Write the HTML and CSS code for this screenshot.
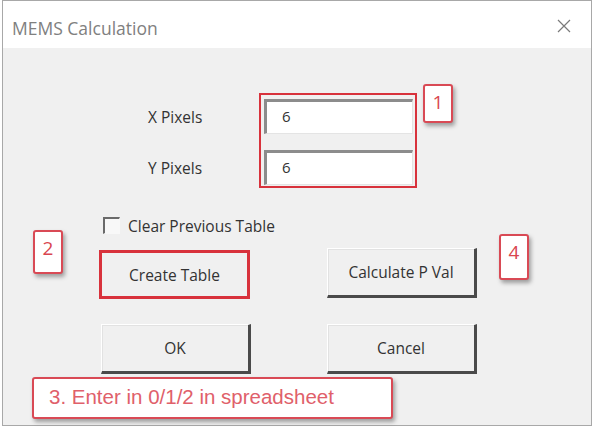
FILE: index.html
```html
<!DOCTYPE html>
<html>
<head>
<meta charset="utf-8">
<link rel="stylesheet" href="styles.css">
</head>
<body>
<div class="dialog">
  <div class="titlebar">
    <span class="title">MEMS Calculation</span>
    <svg class="close" width="14" height="14" viewBox="0 0 14 14"><path d="M1 1 L13 13 M13 1 L1 13" stroke="#7a7a7a" stroke-width="1.2" fill="none"/></svg>
  </div>
  <div class="content">
    <div class="fields">
      <div class="labels">
        <span class="lbl">X Pixels</span>
        <span class="lbl">Y Pixels</span>
      </div>
      <div class="hl-box">
        <div class="tb">6</div>
        <div class="tb">6</div>
      </div>
    </div>
    <div class="check-row">
      <span class="checkbox"></span>
      <span class="check-label">Clear Previous Table</span>
    </div>
    <div class="btn-row row1">
      <div class="btn btn-hl">Create Table</div>
      <div class="btn">Calculate P Val</div>
    </div>
    <div class="btn-row row2">
      <div class="btn">OK</div>
      <div class="btn">Cancel</div>
    </div>
  </div>
  <div class="callout c1">1</div>
  <div class="callout c2">2</div>
  <div class="callout c4">4</div>
  <div class="callout c3">3. Enter in 0/1/2 in spreadsheet</div>
</div>
</body>
</html>
```
FILE: styles.css
```css
html, body {
  margin: 0;
  padding: 0;
  background: #ffffff;
}
body {
  width: 594px;
  height: 428px;
  overflow: hidden;
  font-family: "Open Sans", "Noto Sans", sans-serif;
  color: #333333;
}
.dialog {
  position: relative;
  margin-left: 2px;
  width: 588px;
  height: 424px;
  border: 1px solid #a8a8a8;
  background: #f0f0f0;
}
.titlebar {
  height: 47px;
  background: #ffffff;
  display: flex;
  align-items: center;
  justify-content: space-between;
  padding: 0 20px 0 9px;
}
.title {
  font-size: 17.5px;
  color: #808080;
  margin-top: 6px;
}
.close {
  display: block;
  margin-top: 2px;
}
.content {
  display: flex;
  flex-direction: column;
}
.fields {
  display: flex;
  margin-top: 45px;
  padding-left: 145px;
}
.labels {
  width: 111px;
  display: flex;
  flex-direction: column;
  gap: 16px;
  padding-top: 6px;
}
.lbl {
  height: 35px;
  display: flex;
  align-items: center;
  font-size: 15.5px;
  color: #333;
}
.hl-box {
  border: 2px solid #d8323c;
  padding: 4px 2px 1px 3px;
  display: flex;
  flex-direction: column;
  gap: 16px;
}
.tb {
  width: 130px;
  height: 31px;
  background: #ffffff;
  border-top: 3px solid #8c8c8c;
  border-left: 3px solid #8c8c8c;
  border-right: 1px solid #e4e4e4;
  border-bottom: 1px solid #e4e4e4;
  padding-left: 15px;
  box-sizing: content-box;
  font-size: 15px;
  line-height: 28px;
  color: #333;
}
.check-row {
  display: flex;
  align-items: center;
  height: 17px;
  margin-top: 29px;
  padding-left: 100px;
  gap: 8px;
}
.checkbox {
  width: 14px;
  height: 14px;
  background: #f8f8f8;
  border-top: 2px solid #6a6a6a;
  border-left: 2px solid #6a6a6a;
  border-right: 1px solid #f8f8f8;
  border-bottom: 1px solid #f8f8f8;
  box-sizing: content-box;
}
.check-label {
  font-size: 15.5px;
  color: #333;
}
.btn-row {
  display: flex;
  align-items: flex-start;
}
.row1 {
  margin-top: 14px;
  padding-left: 96px;
  gap: 77px;
}
.row2 {
  margin-top: 25px;
  padding-left: 98px;
  gap: 76px;
}
.btn {
  box-sizing: border-box;
  width: 150px;
  height: 50px;
  display: flex;
  align-items: center;
  justify-content: center;
  background: #f0f0f0;
  border-top: 1px solid #ffffff;
  border-left: 1px solid #ffffff;
  border-right: 3px solid #4a4a4a;
  border-bottom: 3px solid #4a4a4a;
  font-size: 15.5px;
  color: #333;
  box-shadow: inset 1px 1px 0 #e2e2e2;
}
.btn-hl {
  width: 151px;
  height: 49px;
  margin-top: 2px;
  border: 3px solid #d8323c;
  box-shadow: none;
}
.callout {
  position: absolute;
  box-sizing: border-box;
  background: #ffffff;
  border: 2px solid #d94a55;
  border-radius: 3px;
  box-shadow: 2px 3px 4px rgba(0, 0, 0, 0.35);
  color: #d9464f;
  font-family: "Open Sans", "Noto Sans", sans-serif;
  font-size: 19px;
  text-align: center;
  line-height: 24px;
  padding-top: 4px;
}
.c1 {
  left: 420px;
  top: 83px;
  width: 30px;
  height: 39px;
}
.c2 {
  left: 30px;
  top: 229px;
  width: 30px;
  height: 44px;
}
.c4 {
  left: 496px;
  top: 233px;
  width: 30px;
  height: 46px;
}
.c3 {
  left: 29px;
  top: 376px;
  width: 361px;
  height: 42px;
  text-align: left;
  padding: 5px 0 0 15px;
  font-family: "Liberation Sans", Arial, sans-serif;
  font-size: 20.5px;
  color: #e0606a;
  line-height: 26px;
}
```
